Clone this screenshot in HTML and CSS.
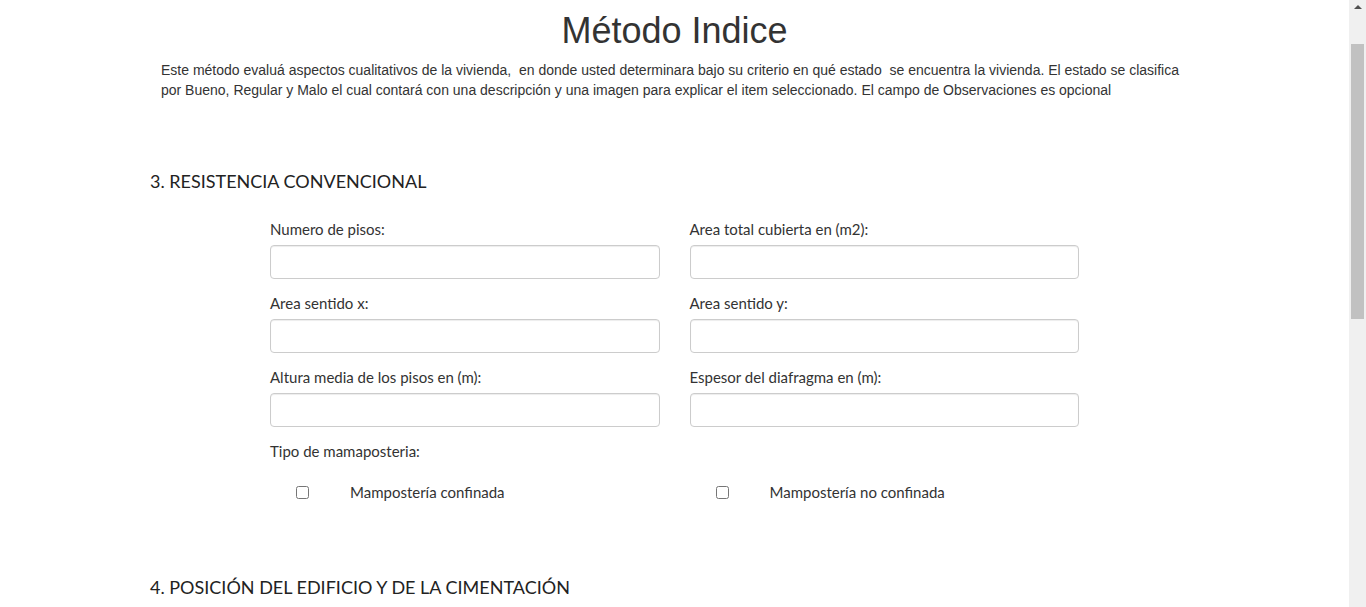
FILE: index.html
```html
<!DOCTYPE html>
<html lang="es">
<head>
<meta charset="utf-8">
<title>Método Indice</title>
<link rel="stylesheet" href="styles.css">
</head>
<body>
<div class="page">
  <h1 class="title">Método Indice</h1>
  <p class="intro">Este método evaluá aspectos cualitativos de la vivienda,&nbsp; en donde usted determinara bajo su criterio en qué estado&nbsp; se encuentra la vivienda. El estado se clasifica por Bueno, Regular y Malo el cual contará con una descripción y una imagen para explicar el item seleccionado. El campo de Observaciones es opcional</p>

  <section class="section">
    <h2 class="section-title">3. RESISTENCIA CONVENCIONAL</h2>
    <div class="form-grid">
      <div class="field">
        <label class="label">Numero de pisos:</label>
        <input class="input" type="text">
      </div>
      <div class="field">
        <label class="label">Area total cubierta en (m2):</label>
        <input class="input" type="text">
      </div>
      <div class="field">
        <label class="label">Area sentido x:</label>
        <input class="input" type="text">
      </div>
      <div class="field">
        <label class="label">Area sentido y:</label>
        <input class="input" type="text">
      </div>
      <div class="field">
        <label class="label">Altura media de los pisos en (m):</label>
        <input class="input" type="text">
      </div>
      <div class="field">
        <label class="label">Espesor del diafragma en (m):</label>
        <input class="input" type="text">
      </div>
      <div class="field full">
        <label class="label">Tipo de mamaposteria:</label>
      </div>
      <div class="check">
        <input class="checkbox" type="checkbox">
        <span class="check-label">Mampostería confinada</span>
      </div>
      <div class="check">
        <input class="checkbox" type="checkbox">
        <span class="check-label">Mampostería no confinada</span>
      </div>
    </div>
  </section>

  <section class="section next">
    <h2 class="section-title">4. POSICIÓN DEL EDIFICIO Y DE LA CIMENTACIÓN</h2>
  </section>
</div>
<div class="scrollbar" aria-hidden="true">
  <span class="scroll-arrow"></span>
  <span class="scroll-thumb"></span>
</div>
</body>
</html>
```
FILE: styles.css
```css
html, body {
  margin: 0;
  padding: 0;
  background: #ffffff;
  color: #333333;
  font-family: "Liberation Sans", Arial, sans-serif;
}

.page {
  width: calc(100% - 17px);
  display: flex;
  flex-direction: column;
  align-items: center;
}

.title {
  margin: 11px 0 0;
  font-size: 36px;
  font-weight: 400;
  line-height: 40px;
  text-align: center;
}

.intro {
  width: 1027px;
  margin: 9px 0 0;
  font-size: 14px;
  line-height: 20px;
}

.section {
  width: 1049px;
  margin-top: 69px;
  display: flex;
  flex-direction: column;
  align-items: center;
}

.section.next {
  margin-top: 72px;
}

.section-title {
  align-self: stretch;
  margin: 0;
  font-family: Lato, "Liberation Sans", sans-serif;
  font-size: 18px;
  font-weight: 400;
  line-height: 24px;
  color: #222;
}

.form-grid {
  width: 809px;
  margin-top: 27px;
  display: grid;
  grid-template-columns: 1fr 1fr;
  column-gap: 30px;
  row-gap: 15px;
}

.field {
  display: flex;
  flex-direction: column;
  gap: 7px;
}

.field.full {
  grid-column: 1 / -1;
}

.label {
  font-family: Lato, "Liberation Sans", sans-serif;
  font-size: 15px;
  line-height: 18px;
  color: #333;
}

.input {
  box-sizing: border-box;
  height: 34px;
  width: 100%;
  margin: 0;
  border: 1px solid #cccccc;
  border-radius: 4px;
  background: #fff;
  box-shadow: inset 0 1px 1px rgba(0,0,0,0.075);
  padding: 6px 12px;
}

.check {
  display: flex;
  align-items: center;
  padding-left: 26px;
  height: 22px;
  margin-top: 6px;
}

.checkbox {
  width: 13px;
  height: 13px;
  margin: 0;
}

.check-label {
  margin-left: 41px;
  font-family: Lato, "Liberation Sans", sans-serif;
  font-size: 15px;
  color: #333;
}

.scrollbar {
  position: fixed;
  top: 0;
  right: 0;
  width: 17px;
  height: 100%;
  background: #f0f0f0;
}

.scroll-arrow {
  position: absolute;
  top: 5px;
  left: 5px;
  width: 0;
  height: 0;
  border-left: 4px solid transparent;
  border-right: 4px solid transparent;
  border-bottom: 4px solid #505050;
}

.scroll-thumb {
  position: absolute;
  top: 44px;
  left: 2px;
  width: 13px;
  height: 275px;
  background: #c1c1c1;
}
```
